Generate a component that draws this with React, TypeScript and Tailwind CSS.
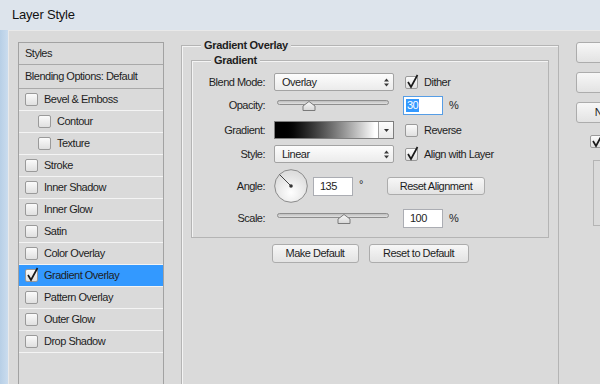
import React from 'react';

type Item = { label: string; indent?: boolean; checked?: boolean; selected?: boolean };

const effects: Item[] = [
  { label: 'Bevel & Emboss' },
  { label: 'Contour', indent: true },
  { label: 'Texture', indent: true },
  { label: 'Stroke' },
  { label: 'Inner Shadow' },
  { label: 'Inner Glow' },
  { label: 'Satin' },
  { label: 'Color Overlay' },
  { label: 'Gradient Overlay', checked: true, selected: true },
  { label: 'Pattern Overlay' },
  { label: 'Outer Glow' },
  { label: 'Drop Shadow' },
];

function CheckBox({ checked = false }: { checked?: boolean }) {
  return (
    <span className="relative h-[13px] w-[13px] shrink-0 rounded-[2px] border border-[#9a9a9a] bg-linear-to-b from-[#fbfbfb] to-[#e0e0e0]">
      {checked && (
        <svg className="absolute -top-[4px] -left-[1px]" width="15" height="16" viewBox="0 0 15 16">
          <path d="M3 9 L6 14 L12.5 2" fill="none" stroke="#1a1a1a" strokeWidth="1.7" />
        </svg>
      )}
    </span>
  );
}

function Btn({ children, className = '' }: { children: React.ReactNode; className?: string }) {
  return (
    <button
      className={`flex items-center justify-center rounded-[3px] border border-[#acacac] bg-linear-to-b from-[#f7f7f7] to-[#e3e3e3] text-[#1e1e1e] ${className}`}
    >
      {children}
    </button>
  );
}

function Select({ value }: { value: string }) {
  return (
    <div className="flex h-[18px] w-[120px] items-center justify-between rounded-[2px] border border-[#a3a3a3] bg-linear-to-b from-[#fdfdfd] to-[#ebebeb] pl-[7px] pr-[4px]">
      <span>{value}</span>
      <svg width="5" height="9" viewBox="0 0 5 9">
        <path d="M0 3.5 L2.5 0.5 L5 3.5Z M0 5.5 L2.5 8.5 L5 5.5Z" fill="#3a3a3a" />
      </svg>
    </div>
  );
}

function Slider({ pos }: { pos: number }) {
  return (
    <svg width="120" height="19" viewBox="0 0 120 19">
      <defs>
        <linearGradient id="thumbFill" x1="0" y1="0" x2="0" y2="1">
          <stop offset="0" stopColor="#fafafa" />
          <stop offset="1" stopColor="#d6d6d6" />
        </linearGradient>
        <linearGradient id="trackFill" x1="0" y1="0" x2="0" y2="1">
          <stop offset="0" stopColor="#b9b9b9" />
          <stop offset="1" stopColor="#e6e6e6" />
        </linearGradient>
      </defs>
      <rect x="3.5" y="4.5" width="111" height="4" rx="2" fill="url(#trackFill)" stroke="#8e8e8e" />
      <path
        d={`M${pos} 5.5 L${pos + 6} 10 L${pos + 6} 14.5 L${pos - 6} 14.5 L${pos - 6} 10 Z`}
        fill="url(#thumbFill)"
        stroke="#7a7a7a"
      />
    </svg>
  );
}

function Dial() {
  return (
    <svg width="34" height="34" viewBox="0 0 34 34">
      <defs>
        <radialGradient id="dialFill" cx="0.5" cy="0.7" r="0.6">
          <stop offset="0" stopColor="#ffffff" />
          <stop offset="1" stopColor="#dedede" />
        </radialGradient>
      </defs>
      <circle cx="17" cy="17" r="16.3" fill="url(#dialFill)" stroke="#8a8a8a" />
      <line x1="17" y1="17" x2="5.5" y2="5.5" stroke="#444" strokeWidth="1" />
      <circle cx="17" cy="17" r="1.8" fill="#333" />
    </svg>
  );
}

function Row({ label, className = '', children }: { label: string; className?: string; children: React.ReactNode }) {
  return (
    <div className={`flex items-center ${className}`}>
      <span className="w-[74px] pr-[1px] text-right">{label}</span>
      <div className="ml-[8px] flex items-center">{children}</div>
    </div>
  );
}

export default function App() {
  return (
    <div className="flex h-[384px] w-[600px] flex-col overflow-hidden bg-[#dde4ec] font-['Liberation_Sans',Arial,sans-serif] text-[11px] tracking-[-0.5px] text-[#1e1e1e]">
      {/* title bar */}
      <div className="flex h-[30px] shrink-0 items-center pl-[12px] text-[13px] tracking-[-0.2px] text-[#111]">Layer Style</div>

      <div className="flex flex-1">
        <div className="w-[8px] shrink-0 bg-linear-to-r from-[#b7cfe6] to-[#cadcee]" />
        <div className="flex flex-1 items-start border-t border-l border-[#e9e9e9] bg-[#dadada] pl-[9px] pt-[7px]">
          {/* styles list */}
          <div className="mt-[4px] w-[146px] shrink-0 self-stretch border-t border-r border-l border-[#a2a2a2]">
            <div className="flex h-[22px] items-center border-b border-[#a9a9a9] pl-[6px]">Styles</div>
            <div className="flex h-[24px] items-center border-b border-[#a9a9a9] pl-[6px]">Blending Options: Default</div>
            {effects.map((it) => (
              <div
                key={it.label}
                className={`flex h-[22px] items-center gap-[6px] border-b border-[#f4f4f4] ${it.indent ? 'pl-[19px]' : 'pl-[6px]'} ${it.selected ? 'bg-[#3399ff]' : ''}`}
              >
                <CheckBox checked={it.checked} />
                <span>{it.label}</span>
              </div>
            ))}
          </div>

          {/* Gradient Overlay fieldset */}
          <fieldset className="ml-[17px] w-[378px] shrink-0 border border-[#b4b4b4] px-[9px] pb-[200px] shadow-[inset_1px_1px_0_#f4f4f4]">
            <legend className="ml-[10px] bg-[#dadada] px-[3px] text-[11px] leading-[14px] font-bold tracking-[-0.3px]">Gradient Overlay</legend>
            <fieldset className="mt-[1px] border border-[#b4b4b4] pt-[6px] pb-[9px] shadow-[inset_1px_1px_0_#f4f4f4]">
              <legend className="ml-[19px] bg-[#dadada] px-[3px] leading-[14px] font-bold tracking-[-0.3px]">Gradient</legend>

              <Row label="Blend Mode:" className="h-[18px]">
                <Select value="Overlay" />
                <span className="ml-[11px] flex items-center gap-[6px]">
                  <CheckBox checked />
                  Dither
                </span>
              </Row>

              <Row label="Opacity:" className="mt-[5px] h-[19px]">
                <Slider pos={35} />
                <span className="ml-[9px] flex h-[19px] w-[40px] items-center border border-[#569de5] bg-white pl-[2px]">
                  <span className="bg-[#3399ff] px-[1px] leading-[13px] text-white">30</span>
                </span>
                <span className="ml-[6px]">%</span>
              </Row>

              <Row label="Gradient:" className="mt-[6px] h-[18px]">
                <div className="flex h-[18px] w-[120px] border border-[#7e7e7e]">
                  <div className="flex-1 bg-linear-to-r from-black from-[6%] to-white to-[97%]" />
                  <div className="flex w-[15px] items-center justify-center border-l border-[#a0a0a0] bg-linear-to-b from-[#fdfdfd] to-[#e9e9e9]">
                    <svg width="5" height="3" viewBox="0 0 5 3">
                      <path d="M0 0 L5 0 L2.5 3Z" fill="#333" />
                    </svg>
                  </div>
                </div>
                <span className="ml-[11px] flex items-center gap-[6px]">
                  <CheckBox />
                  Reverse
                </span>
              </Row>

              <Row label="Style:" className="mt-[6px] h-[18px]">
                <Select value="Linear" />
                <span className="ml-[11px] flex items-center gap-[6px]">
                  <CheckBox checked />
                  Align with Layer
                </span>
              </Row>

              <Row label="Angle:" className="mt-[6px] h-[34px]">
                <Dial />
                <span className="ml-[5px] flex h-[19px] w-[40px] items-center border border-[#abadb3] bg-white pl-[6px]">135</span>
                <span className="w-[34px] -translate-y-[2px] pl-[6px] text-[11px]">°</span>
                <Btn className="h-[18px] w-[98px]">Reset Alignment</Btn>
              </Row>

              <Row label="Scale:" className="mt-[6px] h-[19px]">
                <Slider pos={70} />
                <span className="ml-[9px] flex h-[19px] w-[40px] items-center border border-[#abadb3] bg-white pl-[6px]">100</span>
                <span className="ml-[6px]">%</span>
              </Row>
            </fieldset>

            <div className="mt-[6px] flex justify-center gap-[10px]">
              <Btn className="h-[19px] w-[87px]">Make Default</Btn>
              <Btn className="h-[19px] w-[100px]">Reset to Default</Btn>
            </div>
          </fieldset>

          {/* right column */}
          <div className="ml-[17px] mt-[4px] flex w-[90px] shrink-0 flex-col">
            <Btn className="h-[21px] w-[90px] border-[#6f6f6f]">OK</Btn>
            <Btn className="mt-[9px] h-[21px] w-[90px]">Cancel</Btn>
            <Btn className="mt-[9px] h-[21px] w-[90px]">New Style...</Btn>
            <span className="mt-[10px] ml-[14px] flex items-center gap-[6px]">
              <CheckBox checked />
              Preview
            </span>
            <div className="mt-[10px] ml-[17px] h-[66px] w-[60px] border border-[#b4b4b4]" />
          </div>
        </div>
      </div>
    </div>
  );
}
